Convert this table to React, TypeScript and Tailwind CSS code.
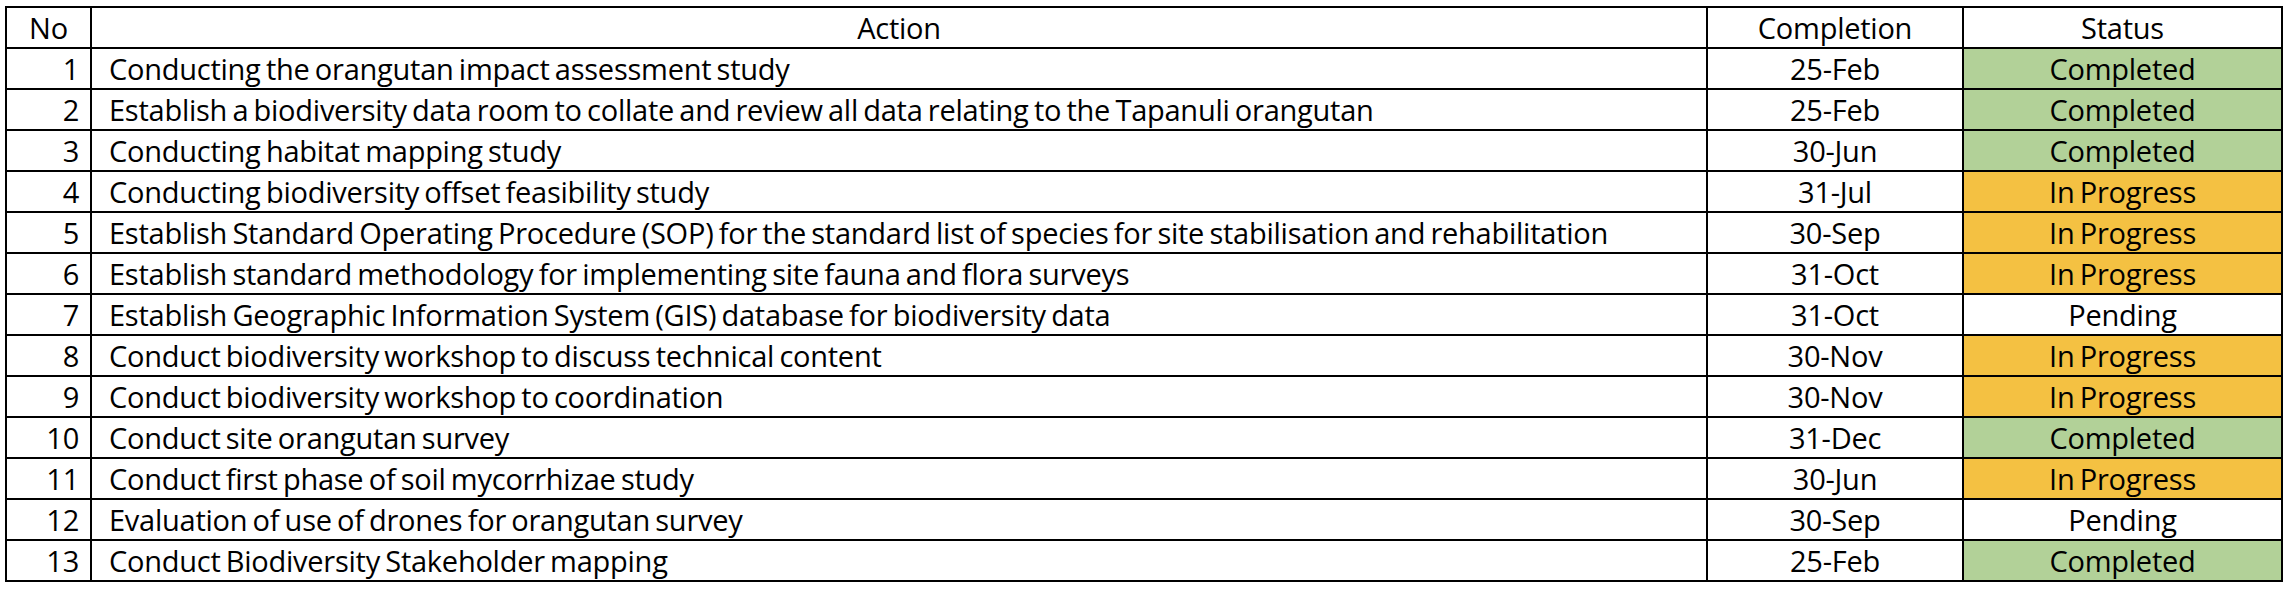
import React from "react";

type Row = { no: number; action: string; date: string; status: "Completed" | "In Progress" | "Pending" };

const rows: Row[] = [
  { no: 1, action: "Conducting the orangutan impact assessment study", date: "25-Feb", status: "Completed" },
  { no: 2, action: "Establish a biodiversity data room to collate and review all data relating to the Tapanuli orangutan", date: "25-Feb", status: "Completed" },
  { no: 3, action: "Conducting habitat mapping study", date: "30-Jun", status: "Completed" },
  { no: 4, action: "Conducting biodiversity offset feasibility study", date: "31-Jul", status: "In Progress" },
  { no: 5, action: "Establish Standard Operating Procedure (SOP) for the standard list of species for site stabilisation and rehabilitation", date: "30-Sep", status: "In Progress" },
  { no: 6, action: "Establish standard methodology for implementing site fauna and flora surveys", date: "31-Oct", status: "In Progress" },
  { no: 7, action: "Establish Geographic Information System (GIS) database for biodiversity data", date: "31-Oct", status: "Pending" },
  { no: 8, action: "Conduct biodiversity workshop to discuss technical content", date: "30-Nov", status: "In Progress" },
  { no: 9, action: "Conduct biodiversity workshop to coordination", date: "30-Nov", status: "In Progress" },
  { no: 10, action: "Conduct site orangutan survey", date: "31-Dec", status: "Completed" },
  { no: 11, action: "Conduct first phase of soil mycorrhizae study", date: "30-Jun", status: "In Progress" },
  { no: 12, action: "Evaluation of use of drones for orangutan survey", date: "30-Sep", status: "Pending" },
  { no: 13, action: "Conduct Biodiversity Stakeholder mapping", date: "25-Feb", status: "Completed" },
];

const statusBg: Record<Row["status"], string> = {
  Completed: "bg-[#b2d198]",
  "In Progress": "bg-[#f4c142]",
  Pending: "bg-white",
};

export default function App() {
  return (
    <div className="w-[2287px] h-[592px] bg-white font-['Open_Sans',sans-serif] text-[29px] leading-[39px] tracking-[-0.25px] [word-spacing:-2px] text-black">
      <div className="ml-[5px] mt-[6px] w-[2278px] grid grid-cols-[83px_1614px_254px_317px] auto-rows-[39px] gap-[2px] bg-black p-[2px]">
        <div className="bg-white text-center">No</div>
        <div className="bg-white text-center">Action</div>
        <div className="bg-white text-center">Completion</div>
        <div className="bg-white text-center">Status</div>
        {rows.map((r) => (
          <React.Fragment key={r.no}>
            <div className="bg-white text-right pr-[11px]">{r.no}</div>
            <div className="bg-white pl-[17px] whitespace-nowrap">{r.action}</div>
            <div className="bg-white text-center">{r.date}</div>
            <div className={`${statusBg[r.status]} text-center`}>{r.status}</div>
          </React.Fragment>
        ))}
      </div>
    </div>
  );
}
